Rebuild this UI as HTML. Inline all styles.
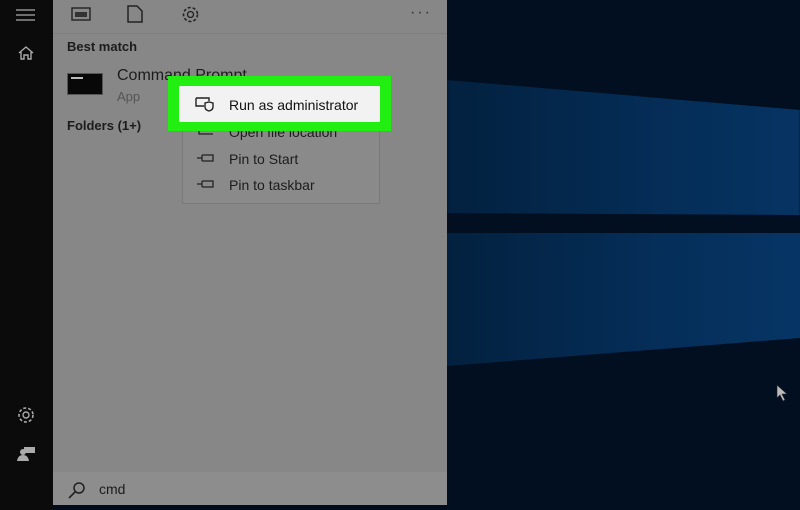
<!DOCTYPE html>
<html><head><style>
body{margin:0;width:800px;height:510px;overflow:hidden;position:relative;font-family:"Liberation Sans",sans-serif;background:#010c1c}
.bg{position:absolute;left:447px;top:0;width:353px;height:510px;background:#020f20;overflow:hidden}
.b1{position:absolute;left:0;top:0;width:353px;height:510px;background:linear-gradient(90deg,#03213f,#052d57 60%,#063463);clip-path:polygon(0 80px,353px 110px,353px 215px,0 213px);filter:blur(1px)}
.b2{position:absolute;left:0;top:0;width:353px;height:510px;background:linear-gradient(90deg,#03213f,#052e59 60%,#063565);clip-path:polygon(0 233px,353px 233px,353px 338px,0 366px)}
.side{position:absolute;left:0;top:0;width:53px;height:510px;background:#0b0b0b}
.panel{position:absolute;left:53px;top:0;width:394px;height:505px;background:#878787}
.search{position:absolute;left:53px;top:472px;width:394px;height:33px;background:#8d8d8d}
.t{position:absolute;color:#1c1c1c;white-space:nowrap}
.menu{position:absolute;left:182px;top:110px;width:196px;height:92px;background:#8a8a8a;border:1px solid #7a7a7a}
.green{position:absolute;left:168px;top:76px;width:223px;height:55px;background:#22ee11}
.white{position:absolute;left:179px;top:86px;width:201px;height:36px;background:#f2f2f2}
</style></head><body>
<div class="bg"><div class="b1"></div><div class="b2"></div></div>
<div class="side"></div>
<svg style="position:absolute;left:16px;top:9px" width="20" height="12"><path d="M0 1H19M0 6H19M0 11H19" stroke="#aaa" stroke-width="1.3"/></svg>
<svg style="position:absolute;left:17px;top:45px" width="18" height="16"><path d="M2 8L9 2L16 8M4 7V14H7V10H11V14H14V7" stroke="#aaa" fill="none" stroke-width="1.4"/></svg>
<svg style="position:absolute;left:16px;top:405px" width="20" height="20"><circle cx="10" cy="10" r="3" stroke="#aaa" fill="none" stroke-width="1.4"/><circle cx="10" cy="10" r="7" stroke="#aaa" fill="none" stroke-width="1.6" stroke-dasharray="3 2"/></svg>
<svg style="position:absolute;left:17px;top:446px" width="20" height="16"><rect x="7" y="1" width="11" height="6" fill="#aaa"/><circle cx="6" cy="6" r="3" fill="#aaa"/><path d="M0 15Q1 9 6 9Q11 9 12 15Z" fill="#aaa"/></svg>
<div class="panel"></div>
<div style="position:absolute;left:53px;top:33px;width:394px;height:1px;background:#7e7e7e"></div>
<svg style="position:absolute;left:71px;top:7px" width="20" height="14"><rect x="1" y="1" width="18" height="12" fill="none" stroke="#222" stroke-width="1.4"/><rect x="4" y="5" width="12" height="5" fill="#333"/></svg>
<svg style="position:absolute;left:127px;top:5px" width="16" height="18"><path d="M1 1H10L15 6V17H1Z" fill="none" stroke="#222" stroke-width="1.5"/></svg>
<svg style="position:absolute;left:181px;top:5px" width="19" height="19"><circle cx="9.5" cy="9.5" r="3" fill="none" stroke="#222" stroke-width="1.3"/><circle cx="9.5" cy="9.5" r="7" fill="none" stroke="#222" stroke-width="1.6" stroke-dasharray="3 2"/></svg>
<div class="t" style="left:410px;top:4px;font-size:16px;letter-spacing:2px;color:#333">···</div>
<div class="t" style="left:67px;top:39px;font-size:13px;font-weight:bold">Best match</div>
<div style="position:absolute;left:67px;top:73px;width:34px;height:20px;background:#080808;border:1px solid #555"><div style="position:absolute;left:3px;top:3px;width:12px;height:2px;background:#bbb"></div></div>
<div class="t" style="left:117px;top:67px;font-size:16px">Command Prompt</div>
<div class="t" style="left:117px;top:89px;font-size:13px;color:#555">App</div>
<div class="t" style="left:67px;top:118px;font-size:13px;font-weight:bold">Folders (1+)</div>
<div class="menu"></div>
<svg style="position:absolute;left:197px;top:127px" width="20" height="10"><path d="M2 1V7H16" fill="none" stroke="#222" stroke-width="1.3"/></svg>
<div class="t" style="left:229px;top:124px;font-size:14px">Open file location</div>
<div class="t" style="left:229px;top:151px;font-size:14px">Pin to Start</div>
<div class="t" style="left:229px;top:177px;font-size:14px">Pin to taskbar</div>
<svg style="position:absolute;left:197px;top:153px" width="20" height="10"><path d="M0 5H5M5 2V8M5 2H16V8H5" fill="none" stroke="#222" stroke-width="1.3"/></svg>
<svg style="position:absolute;left:197px;top:179px" width="20" height="10"><path d="M0 5H5M5 2V8M5 2H16V8H5" fill="none" stroke="#222" stroke-width="1.3"/></svg>
<div class="green"></div>
<div class="white"></div>
<svg style="position:absolute;left:195px;top:97px" width="22" height="16"><path d="M1 1H14V4M1 1V9H9" fill="none" stroke="#222" stroke-width="1.4"/><path d="M10 6L14 5L18 6V10Q18 13 14 14Q10 13 10 10Z" fill="none" stroke="#222" stroke-width="1.4"/></svg>
<div class="t" style="left:229px;top:97px;font-size:14px;color:#111">Run as administrator</div>
<div class="search"></div>
<svg style="position:absolute;left:67px;top:481px" width="20" height="18"><circle cx="12" cy="7" r="5" fill="none" stroke="#222" stroke-width="1.5"/><path d="M8 11L2 17" stroke="#222" stroke-width="1.6"/></svg>
<div class="t" style="left:99px;top:481px;font-size:14px">cmd</div>
<svg style="position:absolute;left:776px;top:384px" width="14" height="18"><path d="M1 1V14L4 11L7 17L9 16L6 10H11Z" fill="#bbb" stroke="#222" stroke-width="0.6"/></svg>
</body></html>
